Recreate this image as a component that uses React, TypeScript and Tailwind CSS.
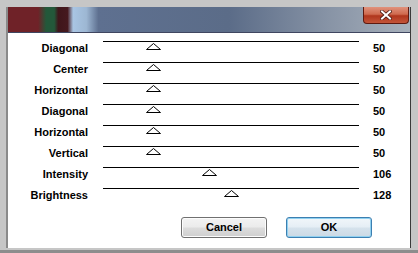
const rows = [
  { label: 'Diagonal', value: 50 },
  { label: 'Center', value: 50 },
  { label: 'Horizontal', value: 50 },
  { label: 'Diagonal', value: 50 },
  { label: 'Horizontal', value: 50 },
  { label: 'Vertical', value: 50 },
  { label: 'Intensity', value: 106 },
  { label: 'Brightness', value: 128 },
]

function SliderRow({ label, value }: { label: string; value: number }) {
  return (
    <div className="flex h-[21px]">
      <div className="w-[80px] pt-[1px] text-right leading-[13px]">{label}</div>
      {/* track, thumb hangs under the line */}
      <div className="relative ml-[15px] w-[256px] border-t border-black">
        <svg
          className="absolute top-[1px]"
          style={{ left: value - 7 }}
          width="15"
          height="7"
          viewBox="0 0 15 7"
        >
          <polygon points="0.5,6.5 7.5,0.5 14.5,6.5" fill="white" stroke="black" strokeWidth="1" />
        </svg>
      </div>
      <div className="ml-[14px] pt-[1px] leading-[13px]">{value}</div>
    </div>
  )
}

export default function App() {
  return (
    <div
      className="flex h-[253px] w-[418px] flex-col border-b-[3px] border-[#8d8d8d] bg-[#c6c6c6] pb-[2px] pl-[6px] pr-[7px] pt-[7px] text-[11px] font-bold text-black"
      style={{ fontFamily: '"Liberation Sans", Arial, sans-serif' }}
    >
      <div className="flex flex-1 flex-col border-l-2 border-r border-l-[#8a8a8a] border-r-[#3a3a3a]">
        {/* title bar */}
        <div className="flex h-[26px] items-start justify-end border-b border-[#3f4660] bg-[linear-gradient(90deg,#6f2228_0%,#6f2228_7.5%,#23583a_9.5%,#23583a_11.5%,#3f161b_12.5%,#46191f_14.8%,#a9c5e3_16.2%,#9db7d3_19.5%,#5e7090_22.5%,#5b6c88_55%,#8894a6_80%,#a7b0bb_100%)] pr-[1px]">
          <div className="flex h-[17px] w-[46px] items-center justify-center rounded-b-[4px] border border-t-0 border-[#5e1a10] bg-[linear-gradient(180deg,#e0927c_0%,#cf6a4f_45%,#b0361d_55%,#c3553a_100%)]">
            <svg width="12" height="10" viewBox="0 0 12 10">
              <path d="M2 1.5 L10 8.5 M10 1.5 L2 8.5" stroke="#4a1a12" strokeWidth="3.6" strokeLinecap="square" />
              <path d="M2 1.5 L10 8.5 M10 1.5 L2 8.5" stroke="white" strokeWidth="2" strokeLinecap="square" />
            </svg>
          </div>
        </div>

        <div className="flex flex-1 flex-col bg-white pt-[8px]">
          {rows.map((r, i) => (
            <SliderRow key={i} label={r.label} value={r.value} />
          ))}

          <div className="mt-[8px] flex justify-end gap-[19px] pr-[38px]">
            <button className="h-[21px] w-[86px] rounded-[3px] border border-[#707070] bg-[linear-gradient(180deg,#f3f3f3_0%,#ebebeb_48%,#dcdcdc_52%,#cfcfcf_100%)] text-[11px] font-bold leading-[19px] shadow-[inset_0_0_0_1px_#fcfcfc]">
              Cancel
            </button>
            <button className="h-[21px] w-[86px] rounded-[3px] border border-[#3c7fb1] bg-[linear-gradient(180deg,#f1f6fa_0%,#e5eef5_48%,#d5e2ec_52%,#cbd9e4_100%)] text-[11px] font-bold leading-[19px] shadow-[inset_0_0_0_1px_#8fd0f0]">
              OK
            </button>
          </div>
        </div>
      </div>
    </div>
  )
}
